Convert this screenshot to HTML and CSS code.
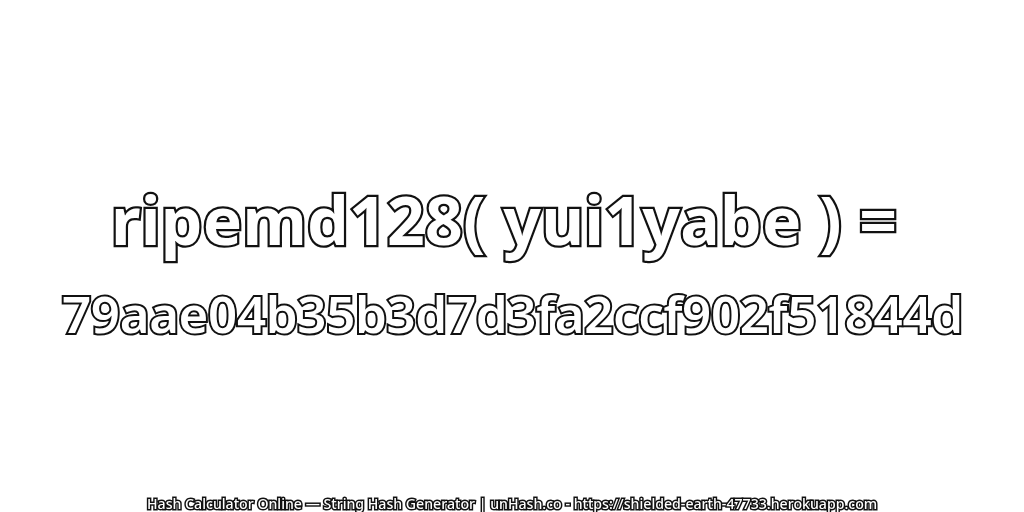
FILE: index.html
```html
<!DOCTYPE html>
<html lang="en">
<head>
<meta charset="utf-8">
<title>ripemd128 hash</title>
<link rel="stylesheet" href="styles.css">
</head>
<body>
<main class="page">
  <div class="result">
    <h1 class="line line-expr">ripemd128( yui1yabe ) =</h1>
    <p class="line line-hash">79aae04b35b3d7d3fa2ccf902f51844d</p>
  </div>
  <footer class="foot">Hash Calculator Online — String Hash Generator | unHash.co - https://shielded-earth-47733.herokuapp.com</footer>
</main>
</body>
</html>
```

FILE: styles.css
```css
html, body { margin: 0; padding: 0; background: #fff; }
.page { width: 1024px; height: 512px; display: flex; flex-direction: column; align-items: center; overflow: hidden; font-family: "Noto Sans", "Open Sans", sans-serif; }
.result { flex: 1; display: flex; flex-direction: column; align-items: center; justify-content: center; padding-top: 21px; }
.line { margin: 0; color: #fff; white-space: nowrap; font-weight: 700; -webkit-text-stroke: 4.5px #111; paint-order: stroke fill; will-change: transform; }
.line-expr { font-size: 66px; line-height: 88px; letter-spacing: 0.27px; padding-right: 15px; }
.line-hash { font-size: 51px; line-height: 60px; letter-spacing: -0.35px; margin-top: 20px; -webkit-text-stroke-width: 4px; font-weight: 600; }
.foot { font-size: 14.15px; line-height: 16px; color: #fff; font-weight: 500; -webkit-text-stroke: 3px #111; paint-order: stroke fill; white-space: nowrap; will-change: transform; }
```
